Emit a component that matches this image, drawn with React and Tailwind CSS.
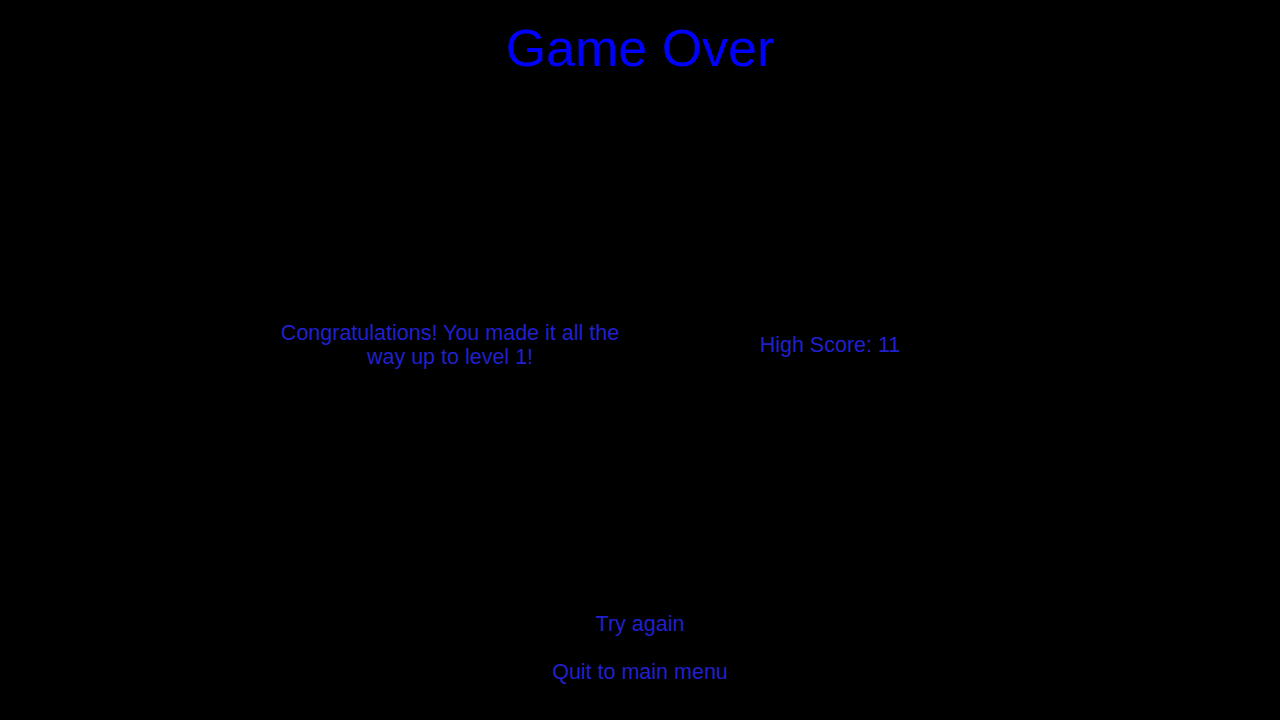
import React from "react";

const GameOver = ({ level = 1, highScore = 11, onRetry, onQuit }) => {
  return (
    <div className="flex h-screen w-full flex-col bg-black font-['Liberation_Sans',Arial,sans-serif] text-[#2020cc]">
      <h1 className="pt-[18px] text-center text-[52px] leading-[60px] text-[#0000ff]">
        Game Over
      </h1>

      <div className="flex flex-1 items-center justify-center">
        <div className="grid w-[760px] grid-cols-2 items-center text-center text-[21.5px] leading-6">
          <p className="px-4">
            Congratulations! You made it all the way up to level {level}!
          </p>
          <p className="px-4">High Score: {highScore}</p>
        </div>
      </div>

      <div className="flex flex-col items-center gap-6 pb-9 text-[21.5px]">
        <button type="button" onClick={onRetry} className="leading-6">
          Try again
        </button>
        <button type="button" onClick={onQuit} className="leading-6">
          Quit to main menu
        </button>
      </div>
    </div>
  );
};

export default function App() {
  return <GameOver />;
}
